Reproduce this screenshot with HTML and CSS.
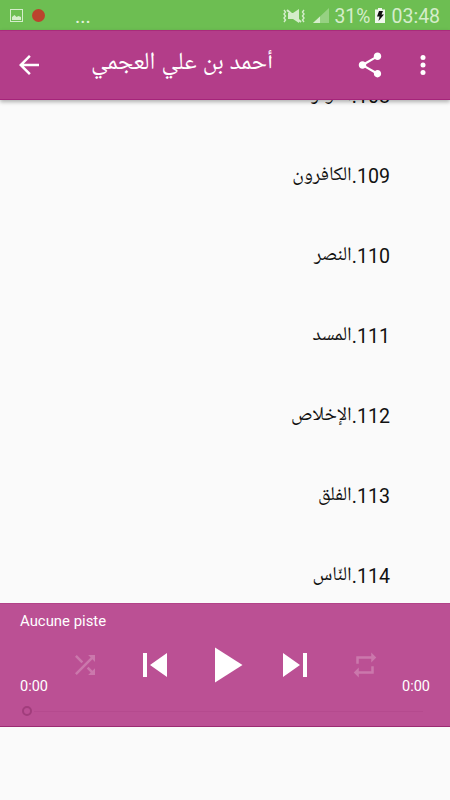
FILE: index.html
```html
<!DOCTYPE html>
<html lang="ar">
<head>
<meta charset="utf-8">
<title>أحمد بن علي العجمي</title>
<link rel="stylesheet" href="styles.css">
</head>
<body>
<div class="status">
  <svg class="picture" viewBox="0 0 13 13"><rect x=".5" y=".5" width="12" height="12" fill="none" stroke="currentColor"/><path d="M2 11V8l2.500-2 2 2 2-1 2.500 1v3z" fill="currentColor"/></svg>
  <span class="record"></span>
  <span class="more">...</span>
  <svg class="mute" viewBox="0 0 24 16"><path d="M6 5h5l6-4v14l-6-4H6z" fill="currentColor"/><path d="M5 2l14 12" stroke="currentColor" stroke-width="2"/><path d="M2 2l1.500 2L2 6l1.500 2L2 10l1.500 2L2 14M22 2l-1.500 2L22 6l-1.500 2 1.500 2-1.500 2 1.500 2" fill="none" stroke="currentColor" stroke-width="1.400"/></svg>
  <svg class="signal" viewBox="0 0 16 16"><path d="M0 15L16 0v15z" fill="currentColor" opacity=".4"/><path d="M0 15l7-6.500V15z" fill="currentColor"/></svg>
  <span class="percent">31%</span>
  <svg class="battery" viewBox="0 0 10 15"><path d="M0 1.500h3V0h4v1.500h3V15H0z" fill="currentColor"/><path d="M4 3h4L6.500 6.500H9L3.500 13l1-4.500H2z" fill="#111"/></svg>
  <span class="clock">03:48</span>
</div>
<header class="appbar">
  <svg class="icon" viewBox="0 0 24 24"><path d="M20 11H7.830l5.590-5.590L12 4l-8 8 8 8 1.410-1.410L7.830 13H20z"/></svg>
  <h1 class="title" dir="rtl">أحمد بن علي العجمي</h1>
  <svg class="icon share" viewBox="0 0 24 24"><path d="M18 16.080c-.76 0-1.440.3-1.960.77L8.910 12.700c.05-.23.09-.46.09-.7s-.04-.47-.09-.7l7.050-4.110c.54.5 1.250.81 2.040.81 1.660 0 3-1.340 3-3s-1.340-3-3-3-3 1.340-3 3c0 .24.04.47.09.7L8.040 9.810C7.500 9.310 6.790 9 6 9c-1.660 0-3 1.340-3 3s1.340 3 3 3c.79 0 1.500-.31 2.040-.81l7.120 4.160c-.05.21-.08.43-.08.65 0 1.610 1.310 2.920 2.920 2.920s2.920-1.310 2.920-2.920-1.310-2.920-2.920-2.920z"/></svg>
  <svg class="icon" viewBox="0 0 24 24"><circle cx="12" cy="6" r="2"/><circle cx="12" cy="12" r="2"/><circle cx="12" cy="18" r="2"/></svg>
</header>
<main class="list" dir="rtl">
  <div class="row"><span class="num">108.</span><span class="name">الكوثر</span></div>
  <div class="row"><span class="num">109.</span><span class="name">الكافرون</span></div>
  <div class="row"><span class="num">110.</span><span class="name">النصر</span></div>
  <div class="row"><span class="num">111.</span><span class="name">المسد</span></div>
  <div class="row"><span class="num">112.</span><span class="name">الإخلاص</span></div>
  <div class="row"><span class="num">113.</span><span class="name">الفلق</span></div>
  <div class="row"><span class="num">114.</span><span class="name">النّاس</span></div>
</main>
<footer class="player">
  <div class="track">Aucune piste</div>
  <div class="controls">
    <span class="time">0:00</span>
    <svg class="icon dim" viewBox="0 0 24 24"><path d="M10.590 9.170L5.410 4 4 5.410l5.170 5.170 1.420-1.410zM14.500 4l2.040 2.040L4 18.590 5.410 20 17.960 7.460 20 9.500V4h-5.500zm.33 9.410l-1.410 1.410 3.130 3.130L14.500 20H20v-5.500l-2.040 2.040-3.130-3.130z"/></svg>
    <svg class="icon skip" viewBox="0 0 24 24"><path d="M6 6h2v12H6zM9.500 12l8.500 6V6z"/></svg>
    <svg class="icon play" viewBox="0 0 24 24"><path d="M8 5v14l11-7z"/></svg>
    <svg class="icon skip" viewBox="0 0 24 24"><path d="M6 18l8.500-6L6 6v12zM16 6v12h2V6z"/></svg>
    <svg class="icon dim" viewBox="0 0 24 24"><path d="M7 7h10v3l4-4-4-4v3H5v6h2V7zm10 10H7v-3l-4 4 4 4v-3h12v-6h-2v4z"/></svg>
    <span class="time end">0:00</span>
  </div>
  <div class="seek"><span class="thumb"></span><span class="bar"></span></div>
</footer>
</body>
</html>
```
FILE: styles.css
```css
* { box-sizing: border-box; }
body {
  margin: 0;
  width: 450px;
  height: 800px;
  overflow: hidden;
  background: #fafafa;
  font-family: Roboto, "Noto Naskh Arabic UI", "Noto Naskh Arabic", "Noto Sans Arabic", "DejaVu Sans", sans-serif;
}
svg { display: block; flex: none; }
.status {
  display: flex;
  align-items: center;
  height: 30px;
  padding: 2px 10.500px 0 10px;
  background: #6dbe52;
  color: #d5edcb;
  font-size: 20px;
}
.picture { width: 13px; height: 13px; margin-top: -1px; }
.record { width: 13px; height: 13px; margin: -1px 0 0 9px; border-radius: 50%; background: #bb432d; }
.more { margin-left: 30px; width: 16px; color: #e4f3de; }
.mute { width: 24px; height: 16px; margin-left: auto; }
.signal { width: 16px; height: 16px; margin-left: 7px; }
.percent { margin-left: 6px; width: 36px; font-size: 19.300px; }
.battery { width: 10px; height: 15px; margin: -1px 0 0 4px; color: #f0f8ed; }
.clock { margin-left: 7px; width: 48px; white-space: nowrap; font-size: 19.500px; }
.appbar {
  position: relative;
  display: flex;
  align-items: center;
  height: 70px;
  padding: 0 12.500px 0 14px;
  background: #b33d89;
  border-top: 1px solid #a82c7b;
  border-bottom: 1px solid #a5247a;
  box-shadow: 0 2px 4px rgba(0, 0, 0, .3);
}
.icon { width: 30px; height: 30px; fill: #fff; }
.title {
  margin: 0 0 2px 43px;
  width: 186px;
  color: #fff;
  font-size: 24.500px;
  font-weight: 400;
  line-height: 40px;
  white-space: nowrap;
}
.share { margin-left: auto; margin-right: 22.500px; }
.list { height: 503px; overflow: hidden; }
.row {
  display: flex;
  align-items: center;
  height: 80px;
  padding-right: 60px;
  color: #111;
  font-size: 19.600px;
  line-height: 30px;
}
.row:first-child { margin-top: -43px; }
.player {
  height: 124px;
  padding: 8px 20px 0;
  background: #bb5094;
  border-top: 1px solid #b24389;
  border-bottom: 1px solid #9b2b72;
  color: #fff;
}
.track { height: 20px; font-size: 14.900px; line-height: 18px; }
.controls { display: flex; align-items: center; height: 60px; margin-top: 3px; }
.time { align-self: flex-end; width: 30px; margin-bottom: -1px; font-size: 14.500px; line-height: 18px; }
.end { margin-left: auto; text-align: right; }
.controls .dim { fill: #cb78ac; }
.time + .dim { margin-left: 20px; }
.skip { width: 48px; height: 48px; margin: 0 16px 0 31px; }
.play { width: 60px; height: 60px; }
.play + .skip { margin: 0 31px 0 16px; }
.seek { display: flex; align-items: center; height: 10px; margin-top: 11px; padding-left: 2px; }
.thumb { width: 10px; height: 10px; border: 2px solid #a13d7c; border-radius: 50%; }
.bar { flex: 1; height: 1px; margin: 0 7px 0 2px; background: #b54a8e; }
```
